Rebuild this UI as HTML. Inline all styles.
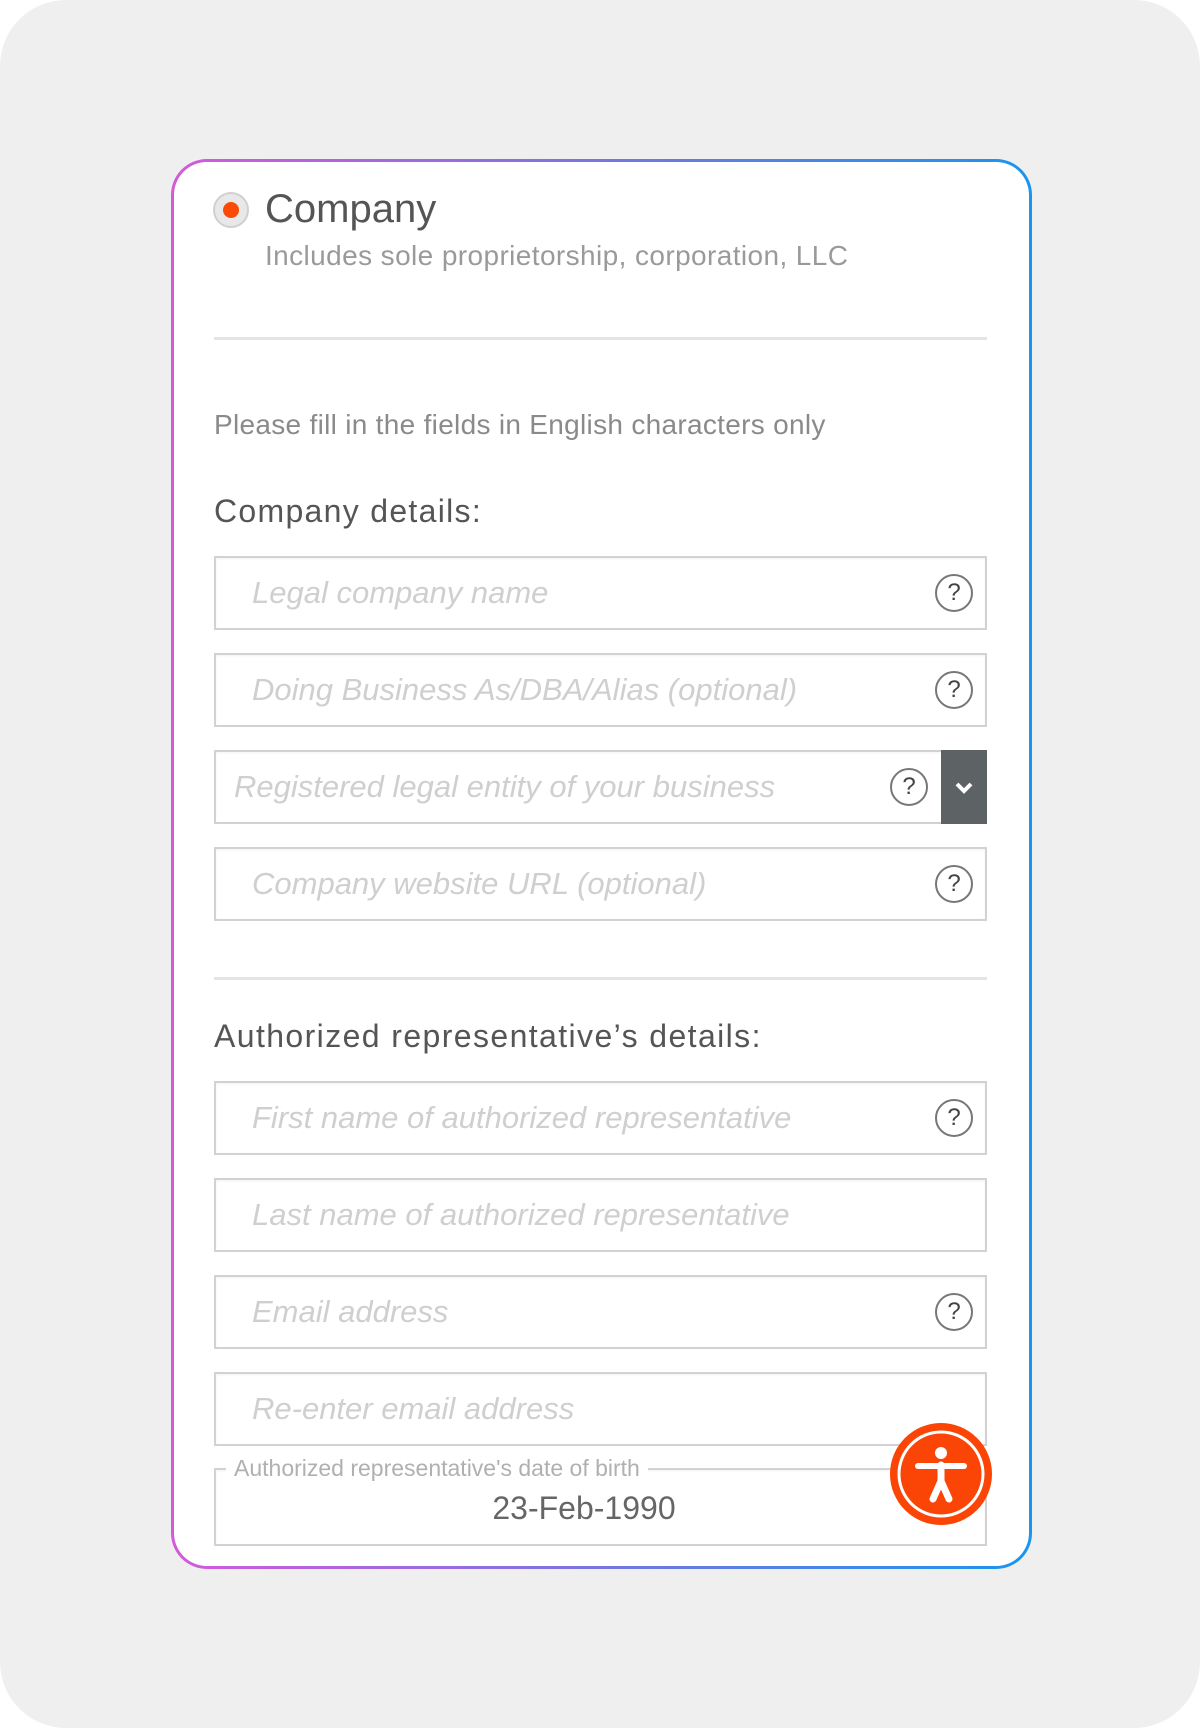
<!DOCTYPE html>
<html><head><meta charset="utf-8"><style>
*{margin:0;padding:0;box-sizing:border-box}
html,body{width:1200px;height:1728px;background:#fff;overflow:hidden}
.bg{position:absolute;left:0;top:0;width:1200px;height:1728px;background:#efefef;border-radius:66px}
.card{position:absolute;left:171px;top:159px;width:861px;height:1410px;border-radius:36px;padding:3px;background:linear-gradient(90deg,#d35bd8,#8a6fe0 40%,#1a95ee)}
.inner{position:relative;width:100%;height:100%;background:#fff;border-radius:33px;overflow:hidden}
.abs{position:absolute}
body{font-family:"Liberation Sans","DejaVu Sans",sans-serif}
.field{position:absolute;left:40px;width:773px;height:74px;border:2px solid #d2d2d2;box-shadow:inset 0 1px 2px rgba(0,0,0,.05)}
.ph{position:absolute;left:36px;top:0;line-height:70px;font-size:31px;font-style:italic;color:#cfcfcf;letter-spacing:0}
.q{position:absolute;right:12px;top:16px;width:38px;height:38px;border:2px solid #777;border-radius:50%;font-size:24px;line-height:34px;text-align:center;color:#444}
.hr{position:absolute;left:40px;width:773px;height:3px;background:#e4e4e4}
</style></head><body>
<div class="bg"></div>
<div class="card"><div class="inner">
 <div class="abs" style="left:39px;top:30px;width:36px;height:36px;border-radius:50%;background:#e8e8e8;border:2px solid #d0d0d0"></div>
 <div class="abs" style="left:49px;top:40px;width:16px;height:16px;border-radius:50%;background:#fa4a06"></div>
 <div class="abs" style="left:91px;top:22px;font-size:40px;color:#555;line-height:50px">Company</div>
 <div class="abs" style="left:91px;top:76px;font-size:28px;color:#9a9a9a;line-height:36px;letter-spacing:0.4px">Includes sole proprietorship, corporation, LLC</div>
 <div class="hr" style="top:175px"></div>
 <div class="abs" style="left:40px;top:245px;font-size:28px;color:#8a8a8a;line-height:36px;letter-spacing:0.3px">Please fill in the fields in English characters only</div>
 <div class="abs" style="left:40px;top:329px;font-size:32px;color:#555;line-height:40px;letter-spacing:1.3px">Company details:</div>

 <div class="field" style="top:394px"><div class="ph">Legal company name</div><div class="q">?</div></div>
 <div class="field" style="top:491px"><div class="ph">Doing Business As/DBA/Alias (optional)</div><div class="q">?</div></div>
 <div class="field" style="top:588px"><div class="ph" style="left:18px">Registered legal entity of your business</div><div class="q" style="right:57px">?</div>
  <div class="abs" style="right:-2px;top:-2px;width:46px;height:74px;background:#5d6365"><svg width="46" height="74"><path d="M16 34l7 7 7-7" stroke="#fff" stroke-width="4" fill="none"/></svg></div></div>
 <div class="field" style="top:685px"><div class="ph">Company website URL (optional)</div><div class="q">?</div></div>

 <div class="hr" style="top:815px"></div>
 <div class="abs" style="left:40px;top:854px;font-size:32px;color:#555;line-height:40px;letter-spacing:1.4px">Authorized representative’s details:</div>

 <div class="field" style="top:919px"><div class="ph">First name of authorized representative</div><div class="q">?</div></div>
 <div class="field" style="top:1016px"><div class="ph">Last name of authorized representative</div></div>
 <div class="field" style="top:1113px"><div class="ph">Email address</div><div class="q">?</div></div>
 <div class="field" style="top:1210px"><div class="ph">Re-enter email address</div></div>

 <div class="field" style="top:1306px;height:78px"></div>
 <div class="abs" style="left:52px;top:1292px;background:#fff;padding:0 8px;font-size:23px;color:#b0b0b0;line-height:28px">Authorized representative's date of birth</div>
 <div class="abs" style="left:260px;top:1326px;width:300px;text-align:center;font-size:32px;color:#666;line-height:40px">23-Feb-1990</div>

 <div class="abs" style="left:716px;top:1261px;width:102px;height:102px;border-radius:50%;background:#fa4506">
  <svg width="102" height="102" viewBox="0 0 102 102"><circle cx="51" cy="51" r="42" fill="none" stroke="#fff" stroke-width="3"/>
  <circle cx="51" cy="30" r="6" fill="#fff"/>
  <path d="M28 43 L74 43" stroke="#fff" stroke-width="6" stroke-linecap="round"/>
  <path d="M51 42 L51 58 M51 58 L43 76 M51 58 L59 76" stroke="#fff" stroke-width="7" stroke-linecap="round" fill="none"/></svg></div>
</div></div>
</body></html>
